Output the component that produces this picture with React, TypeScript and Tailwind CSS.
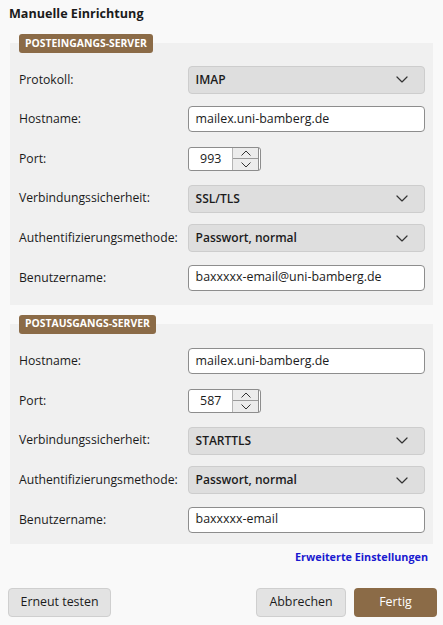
import React from 'react';

const font = { fontFamily: '"Open Sans", "Noto Sans", Arial, sans-serif' };

function Chevron({ up = false, size = 12 }: { up?: boolean; size?: number }) {
    return (
        <svg width={size} height={size * 0.6} viewBox="0 0 10 6" fill="none" className={up ? 'rotate-180' : ''}>
            <path d="M0.8 0.8 L5 5 L9.2 0.8" stroke="#333" strokeWidth="1" strokeLinejoin="round" strokeLinecap="round" />
        </svg>
    );
}

function Select({ value }: { value: string }) {
    return (
        <div className="flex h-[28px] w-[238px] items-center justify-between rounded-[4px] border border-[#cdcdcd] bg-[#dedede] pl-[7px] pr-[16px]">
            <span className="text-[12px] font-semibold text-[#1b1b1b]">{value}</span>
            <Chevron />
        </div>
    );
}

function TextInput({ value }: { value: string }) {
    return (
        <div className="flex h-[26px] w-[238px] items-center rounded-[4px] border border-[#8d8d8d] bg-white px-[7px]">
            <span className="text-[12.4px] text-[#1b1b1b]">{value}</span>
        </div>
    );
}

function PortInput({ value }: { value: string }) {
    return (
        <div className="flex h-[24px] w-[73px] rounded-[3px] border border-[#8d8d8d] bg-white">
            <div className="flex w-[44px] items-center justify-center text-[12.4px] text-[#1b1b1b]">{value}</div>
            <div className="flex w-[26px] flex-col border-l border-[#b5b5b5] bg-[#ececec]">
                <div className="flex flex-1 items-center justify-center border-b border-[#9a9a9a]">
                    <Chevron up size={10} />
                </div>
                <div className="flex flex-1 items-center justify-center">
                    <Chevron size={10} />
                </div>
            </div>
            <div className="w-[2px] border-l border-[#8d8d8d]" />
        </div>
    );
}

type Row = { label: string; kind: 'select' | 'text' | 'port'; value: string };

const incoming: Row[] = [
    { label: 'Protokoll:', kind: 'select', value: 'IMAP' },
    { label: 'Hostname:', kind: 'text', value: 'mailex.uni-bamberg.de' },
    { label: 'Port:', kind: 'port', value: '993' },
    { label: 'Verbindungssicherheit:', kind: 'select', value: 'SSL/TLS' },
    { label: 'Authentifizierungsmethode:', kind: 'select', value: 'Passwort, normal' },
    { label: 'Benutzername:', kind: 'text', value: 'baxxxxx-email@uni-bamberg.de' },
];

const outgoing: Row[] = [
    { label: 'Hostname:', kind: 'text', value: 'mailex.uni-bamberg.de' },
    { label: 'Port:', kind: 'port', value: '587' },
    { label: 'Verbindungssicherheit:', kind: 'select', value: 'STARTTLS' },
    { label: 'Authentifizierungsmethode:', kind: 'select', value: 'Passwort, normal' },
    { label: 'Benutzername:', kind: 'text', value: 'baxxxxx-email' },
];

function ServerSection({ title, rows, pad }: { title: string; rows: Row[]; pad: string }) {
    return (
        <div className="flex flex-col">
            <div className="relative z-10 ml-[19px] -mb-[10px] flex h-[19px] items-center self-start rounded-[3px] bg-[#8b6b47] px-[6px] text-[10.4px] font-bold text-white">
                {title}
            </div>
            <div className={`mx-[10px] flex flex-col bg-[#f0f0f0] pl-[9px] pr-[8px] ${pad}`}>
                {rows.map((row, i) => (
                    <div key={i} className="flex h-[39.6px] items-center">
                        <div className="w-[169px] text-[12.2px] text-[#1b1b1b]">{row.label}</div>
                        {row.kind === 'select' && <Select value={row.value} />}
                        {row.kind === 'text' && <TextInput value={row.value} />}
                        {row.kind === 'port' && <PortInput value={row.value} />}
                    </div>
                ))}
            </div>
        </div>
    );
}

export default function App() {
    return (
        <div className="flex h-[625px] w-[443px] flex-col bg-[#f9f9f9]" style={font}>
            <div className="h-[34px] pl-[9px] pt-[5px] text-[12.6px] font-bold text-[#1b1b1b]">Manuelle Einrichtung</div>
            <ServerSection title="POSTEINGANGS-SERVER" rows={incoming} pad="pt-[17px] pb-[7px]" />
            <div className="h-[10px]" />
            <ServerSection title="POSTAUSGANGS-SERVER" rows={outgoing} pad="pt-[18px] pb-[4px]" />
            <div className="flex justify-end pr-[15px] pt-[5px]">
                <span className="text-[10.8px] font-bold text-[#1a1ad0]">Erweiterte Einstellungen</span>
            </div>
            <div className="mt-[23px] flex items-center pl-[8px] pr-[6px]">
                <button className="h-[29px] w-[103px] rounded-[4px] border border-[#cfcfcf] bg-[#e3e3e3] text-[12.4px] text-[#1b1b1b]">
                    Erneut testen
                </button>
                <div className="flex-1" />
                <button className="h-[29px] w-[90px] rounded-[4px] border border-[#cfcfcf] bg-[#e3e3e3] text-[12.4px] text-[#1b1b1b]">
                    Abbrechen
                </button>
                <button className="ml-[8px] h-[29px] w-[83px] rounded-[4px] bg-[#8b6b47] text-[12.4px] text-white">
                    Fertig
                </button>
            </div>
        </div>
    );
}
